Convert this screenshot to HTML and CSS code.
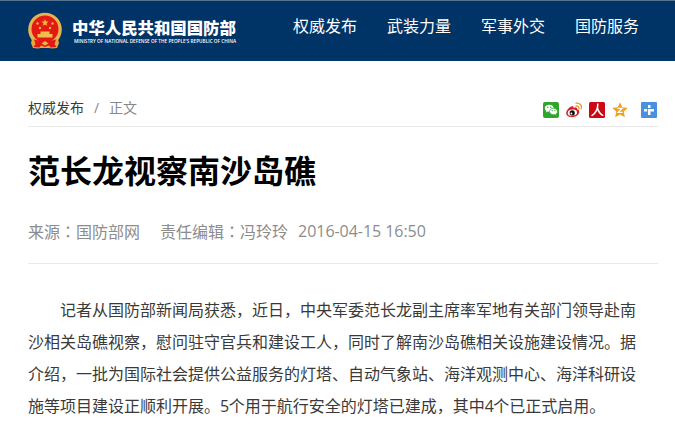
FILE: index.html
```html
<!DOCTYPE html>
<html lang="zh-CN">
<head>
<meta charset="utf-8">
<title>范长龙视察南沙岛礁</title>
<link rel="stylesheet" href="styles.css">
</head>
<body>
<header class="header">
  <svg class="emblem" viewBox="0 0 36 38">
    <circle cx="18" cy="17.5" r="16.800" fill="#e5b453"/>
    <path d="M5 27h26l1 4-2 5-5 .5-3-.5h-8l-3 .5-5-.5-2-5z" fill="#e5a93f"/>
    <circle cx="18" cy="17" r="13.500" fill="#e21a12"/>
    <path d="M18 7l1 2.400 2.600.2-2 1.700.6 2.500-2.200-1.300-2.200 1.300.6-2.500-2-1.700 2.600-.2z" fill="#f5b63c"/>
    <g fill="#eeb146"><circle cx="10.500" cy="11.500" r="1.200"/><circle cx="25.500" cy="11.500" r="1.200"/><circle cx="13" cy="16" r="1.200"/><circle cx="23" cy="16" r="1.200"/></g>
    <path d="M13.500 19.500h9v2.500h3v3.500h-15V22h3z" fill="#f0bd4e"/>
    <path d="M7 27.500l6 1.500 5-1.500 5 1.500 6-1.500-1.500 4.500 2 3-6 .5-1.500-2-4 1.500-4-1.500-1.500 2-6-.5 2-3z" fill="#e21a12"/>
    <path d="M14.500 31.500l3.500-2.500 3.500 2.500-3.500 2z" fill="#e5b453"/>
  </svg>
  <div class="brand">
    <div class="brand-cn">中华人民共和国国防部</div>
    <svg class="brand-en" viewBox="0 0 163 8"><text x="0" y="6" textLength="162" lengthAdjust="spacingAndGlyphs">MINISTRY OF NATIONAL DEFENSE OF THE PEOPLE'S REPUBLIC OF CHINA</text></svg>
  </div>
  <nav class="nav"><a>权威发布</a><a>武装力量</a><a>军事外交</a><a>国防服务</a></nav>
</header>
<main class="page">
  <div class="topline">
    <div class="crumbs"><span>权威发布</span><span class="slash">/</span><span class="current">正文</span></div>
    <div class="share">
      <svg viewBox="0 0 16 16"><rect width="16" height="16" rx="2" fill="#2fa52b"/><path d="M6.300 2.700c-2.500 0-4.500 1.500-4.500 3.500 0 1.200.7 2.100 1.600 2.700L3 10.500l1.800-1 1.500.2c2.500 0 4.500-1.600 4.500-3.500S8.800 2.700 6.300 2.700z" fill="#fff"/><path d="M10.500 6.300c-2.200 0-4 1.400-4 3.200s1.800 3.200 4 3.200l1.300-.2 1.600.9-.4-1.400c.9-.6 1.500-1.500 1.500-2.500 0-1.800-1.800-3.200-4-3.200z" fill="#fff" stroke="#2fa52b" stroke-width=".7"/><g fill="#2fa52b"><circle cx="4.800" cy="5.200" r=".7"/><circle cx="7.800" cy="5.200" r=".7"/><circle cx="9.200" cy="8.700" r=".6"/><circle cx="11.900" cy="8.700" r=".6"/></g></svg>
      <svg viewBox="0 0 16 16"><path d="M5.800 4.300c1.400-.5 2 .2 1.700 1.600 2-.8 4-.5 3.600 1.400 1.500.4 2.400 1.400 2.100 3-.4 2.800-3.600 4.900-7 4.900C2.600 15.200.2 13.500.2 11c0-2.600 3.100-5.900 5.600-6.700z" fill="#d81e24"/><ellipse cx="6.400" cy="10.700" rx="4.700" ry="3.200" fill="#fff" transform="rotate(-8 6.400 10.700)"/><circle cx="6.200" cy="10.900" r="2.600" fill="#111"/><circle cx="5.400" cy="11.500" r=".9" fill="#fff"/><path d="M10 4c2-.4 3.400 1.200 2.800 3M10 1.200c3.500-.7 6.400 2.200 5.300 5.700" fill="none" stroke="#e99a2c" stroke-width="1.300" stroke-linecap="round"/></svg>
      <svg viewBox="0 0 16 16"><rect width="16" height="16" rx="1.500" fill="#cb0a14"/><path d="M8.800 2c.1 4.500-1.600 8.700-5.800 11.500M8.500 6c.8 3.300 2.300 5.700 5.200 7.300" fill="none" stroke="#fff" stroke-width="1.500" stroke-linecap="round"/></svg>
      <svg viewBox="0 0 16 16"><path d="M8 .3l2.300 4.900 5.400.7-3.900 3.700 1 5.600L8 12.500l-4.800 2.700 1-5.600L.3 5.900l5.400-.7z" fill="#eda21c"/><path d="M5.500 6.300h4.700L6 10.300h4.700" fill="none" stroke="#fff" stroke-width="1.200"/></svg>
      <svg class="more" viewBox="0 0 16 16"><rect width="16" height="16" rx="1" fill="#4a8fe0"/><path d="M7 3h2.500v3H7zM3 7h3.200v2.500H3zM7 7h6v2.500H9.500V13H7z" fill="#fff"/></svg>
    </div>
  </div>
  <h1 class="title">范长龙视察南沙岛礁</h1>
  <div class="meta"><span class="source">来源<span class="colon" lang="zh-TW">：</span>国防部网</span><span class="editor">责任编辑<span class="colon" lang="zh-TW">：</span>冯玲玲</span><time>2016-04-15 16:50</time></div>
  <p class="article">记者从国防部新闻局获悉，近日，中央军委范长龙副主席率军地有关部门领导赴南<br>沙相关岛礁视察，慰问驻守官兵和建设工人，同时了解南沙岛礁相关设施建设情况。据<br>介绍，一批为国际社会提供公益服务的灯塔、自动气象站、海洋观测中心、海洋科研设<br>施等项目建设正顺利开展。<span class="digit">5</span>个用于航行安全的灯塔已建成，其中<span class="digit">4</span>个已正式启用。</p>
</main>
</body>
</html>
```
FILE: styles.css
```css
* { box-sizing: border-box; }
body {
  margin: 0;
  height: 437px;
  overflow: hidden;
  background: #fff;
  color: #3a3a3a;
  font-family: "Open Sans", "Noto Sans CJK SC", sans-serif;
  font-size: 16px;
  font-weight: 400;
}
.header {
  display: flex;
  height: 61px;
  padding-left: 27px;
  background: #003366;
  border-top: 1px solid #57738f;
  color: #fff;
}
.emblem { width: 36px; height: 38px; margin-top: 11px; }
.brand { width: 167px; margin: 17px 0 0 9px; }
.brand-cn {
  font: 900 16.4px/18px "Noto Sans CJK SC", sans-serif;
  white-space: nowrap;
}
.brand-en {
  display: block;
  width: 163px;
  height: 8px;
  margin: 1px 0 0 2px;
  overflow: visible;
}
.brand-en text { font: 600 5px "Open Sans", sans-serif; fill: #fff; }
.nav {
  display: flex;
  gap: 30px;
  margin: 12px 0 0 54px;
  line-height: 24px;
  white-space: nowrap;
  font-family: "Noto Sans CJK SC", sans-serif;
}
.page { width: 630px; margin-left: 28px; }
.topline {
  display: flex;
  justify-content: space-between;
  height: 66px;
  border-bottom: 1px solid #e9e9e9;
}
.crumbs { display: flex; margin-top: 36px; font-size: 14px; line-height: 22px; }
.slash { width: 25px; text-align: center; color: #888; }
.current { color: #888; }
.share { display: flex; gap: 7px; margin: 41px 1px 0 0; }
.share svg { width: 16px; height: 16px; }
.share .more { margin-left: 6px; }
.title {
  margin: 18px 0 2px;
  color: #000;
  font: 700 32px/48px "Noto Sans CJK SC", sans-serif;
}
.meta {
  display: flex;
  height: 69px;
  padding-top: 24px;
  border-bottom: 1px solid #e9e9e9;
  color: #8c8c8c;
  line-height: 24px;
  white-space: nowrap;
}
.colon { font-family: "Noto Sans CJK TC", sans-serif; }
.editor { margin: 0 10px 0 20px; }
.meta time { letter-spacing: -0.05px; }
.article {
  margin: 30px 0 0;
  line-height: 32px;
  text-indent: 32px;
  white-space: nowrap;
}
.digit { letter-spacing: -0.5px; }
```
